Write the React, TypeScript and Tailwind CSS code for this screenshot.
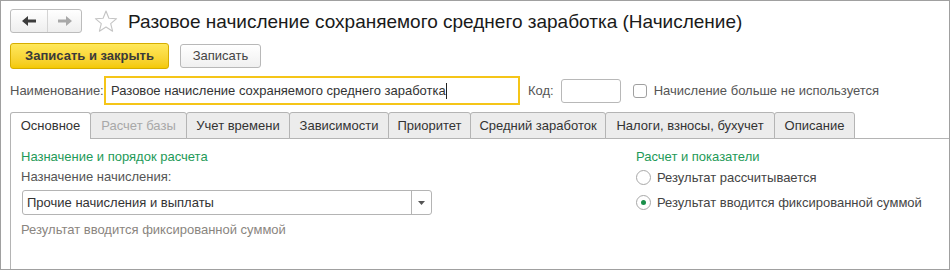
import React from "react";

const tabs: { label: string; w: number; active?: boolean; disabled?: boolean }[] = [
  { label: "Основное", w: 81, active: true },
  { label: "Расчет базы", w: 97, disabled: true },
  { label: "Учет времени", w: 104 },
  { label: "Зависимости", w: 100 },
  { label: "Приоритет", w: 83 },
  { label: "Средний заработок", w: 136 },
  { label: "Налоги, взносы, бухучет", w: 170 },
  { label: "Описание", w: 81 },
];

function Radio({ checked, label }: { checked?: boolean; label: string }) {
  return (
    <div className="flex items-center h-[15px]">
      <div className="w-[15px] h-[15px] rounded-full border border-[#a8a8a8] bg-white flex items-center justify-center">
        {checked && <div className="w-[5px] h-[5px] rounded-full bg-[#1a8f4a]" />}
      </div>
      <span className="ml-[6px] text-[13px] text-[#444]">{label}</span>
    </div>
  );
}

export default function App() {
  return (
    <div
      className="w-[950px] h-[270px] border border-[#a0a0a0] bg-white overflow-hidden text-[#444]"
      style={{ fontFamily: '"Liberation Sans", Arial, sans-serif' }}
    >
      {/* Header */}
      <div className="flex items-center ml-[9px] mt-[8px] h-[24px]">
        <div className="flex h-[24px] w-[72px] border border-[#bcbcbc] rounded-[3px] bg-gradient-to-b from-white to-[#eeeeee]">
          <div className="w-[37px] flex items-center justify-center border-r border-[#d4d4d4]">
            <svg width="14" height="10" viewBox="0 0 14 10">
              <path d="M0 5 L6 0 L6 3.5 L14 3.5 L14 6.5 L6 6.5 L6 10 Z" fill="#3c3c3c" />
            </svg>
          </div>
          <div className="flex-1 flex items-center justify-center">
            <svg width="14" height="10" viewBox="0 0 14 10">
              <path d="M14 5 L8 0 L8 3.5 L0 3.5 L0 6.5 L8 6.5 L8 10 Z" fill="#a8a8a8" />
            </svg>
          </div>
        </div>
        <svg className="ml-[12px]" width="24" height="23" viewBox="0 0 24 23">
          <path
            d="M12 1 L14.9 8.2 L22.6 8.7 L16.7 13.6 L18.6 21.2 L12 17 L5.4 21.2 L7.3 13.6 L1.4 8.7 L9.1 8.2 Z"
            fill="none"
            stroke="#c4c4c4"
            strokeWidth="1.1"
            strokeLinejoin="round"
          />
        </svg>
        <div className="ml-[10px] text-[19px] text-[#1a1a1a] leading-none whitespace-nowrap">
          Разовое начисление сохраняемого среднего заработка (Начисление)
        </div>
      </div>

      {/* Buttons */}
      <div className="flex items-center ml-[9px] mt-[10px] h-[26px]">
        <div className="h-[26px] w-[159px] rounded-[3px] border border-[#d6ad00] bg-gradient-to-b from-[#ffe85a] to-[#f4c900] flex items-center justify-center text-[13px] font-bold text-[#3a3a3a]">
          Записать и закрыть
        </div>
        <div className="ml-[11px] h-[24px] w-[81px] rounded-[3px] border border-[#b8b8b8] bg-gradient-to-b from-white to-[#f0f0f0] flex items-center justify-center text-[13px] text-[#444]">
          Записать
        </div>
      </div>

      {/* Name row */}
      <div className="flex items-center ml-[9px] mt-[7px] h-[29px]">
        <span className="text-[13px] text-[#555] w-[94px]">Наименование:</span>
        <div className="h-[29px] w-[416px] border-2 border-[#f5c518] flex items-center pl-[5px] text-[13px] text-[#333]">
          Разовое начисление сохраняемого среднего заработка
          <span className="inline-block w-px h-[16px] bg-[#222]" />
        </div>
        <span className="ml-[8px] text-[13px] text-[#555]">Код:</span>
        <div className="ml-[7px] h-[24px] w-[60px] rounded-[3px] border border-[#b8b8b8] bg-white" />
        <div className="ml-[12px] w-[14px] h-[14px] rounded-[3px] border border-[#a0a0a0] bg-white" />
        <span className="ml-[7px] text-[13px] text-[#555]">Начисление больше не используется</span>
      </div>

      {/* Tabs */}
      <div className="flex ml-[9px] mt-[7px] h-[27px] relative">
        {tabs.map((t, i) => (
          <div
            key={t.label}
            style={{ width: t.w }}
            className={
              (i > 0 ? "-ml-px " : "") +
              (t.active
                ? "bg-white border-l border-t border-r border-[#b4b4b4] h-[27px] z-10 relative "
                : "bg-[#ececec] border border-[#b4b4b4] h-[27px] ") +
              "rounded-t-[3px] flex items-center justify-center text-[13px] whitespace-nowrap " +
              (t.disabled ? "text-[#a8a8a8]" : "text-[#333]")
            }
          >
            {t.label}
          </div>
        ))}
      </div>

      {/* Panel */}
      <div className="ml-[9px] -mt-px border-t border-l border-[#b4b4b4] h-[140px] flex">
        <div className="pl-[10px] pt-[10px] w-[430px]">
          <div className="text-[13px] text-[#1e9a58] leading-[15px]">Назначение и порядок расчета</div>
          <div className="mt-[5px] text-[13px] text-[#555] leading-[15px]">Назначение начисления:</div>
          <div className="mt-[6px] ml-px h-[25px] w-[410px] rounded-[3px] border border-[#b4b4b4] flex">
            <div className="flex-1 flex items-center pl-[4px] text-[13px] text-[#333]">Прочие начисления и выплаты</div>
            <div className="w-[20px] border-l border-[#b4b4b4] flex items-center justify-center">
              <svg width="7" height="4" viewBox="0 0 7 4">
                <path d="M0 0 L7 0 L3.5 4 Z" fill="#555" />
              </svg>
            </div>
          </div>
          <div className="mt-[7px] text-[13px] text-[#8a8580] leading-[15px]">Результат вводится фиксированной суммой</div>
        </div>
        <div className="ml-[195px] pt-[10px]">
          <div className="text-[13px] text-[#1e9a58] leading-[15px]">Расчет и показатели</div>
          <div className="mt-[6px]">
            <Radio label="Результат рассчитывается" />
          </div>
          <div className="mt-[10px]">
            <Radio checked label="Результат вводится фиксированной суммой" />
          </div>
        </div>
      </div>
    </div>
  );
}
